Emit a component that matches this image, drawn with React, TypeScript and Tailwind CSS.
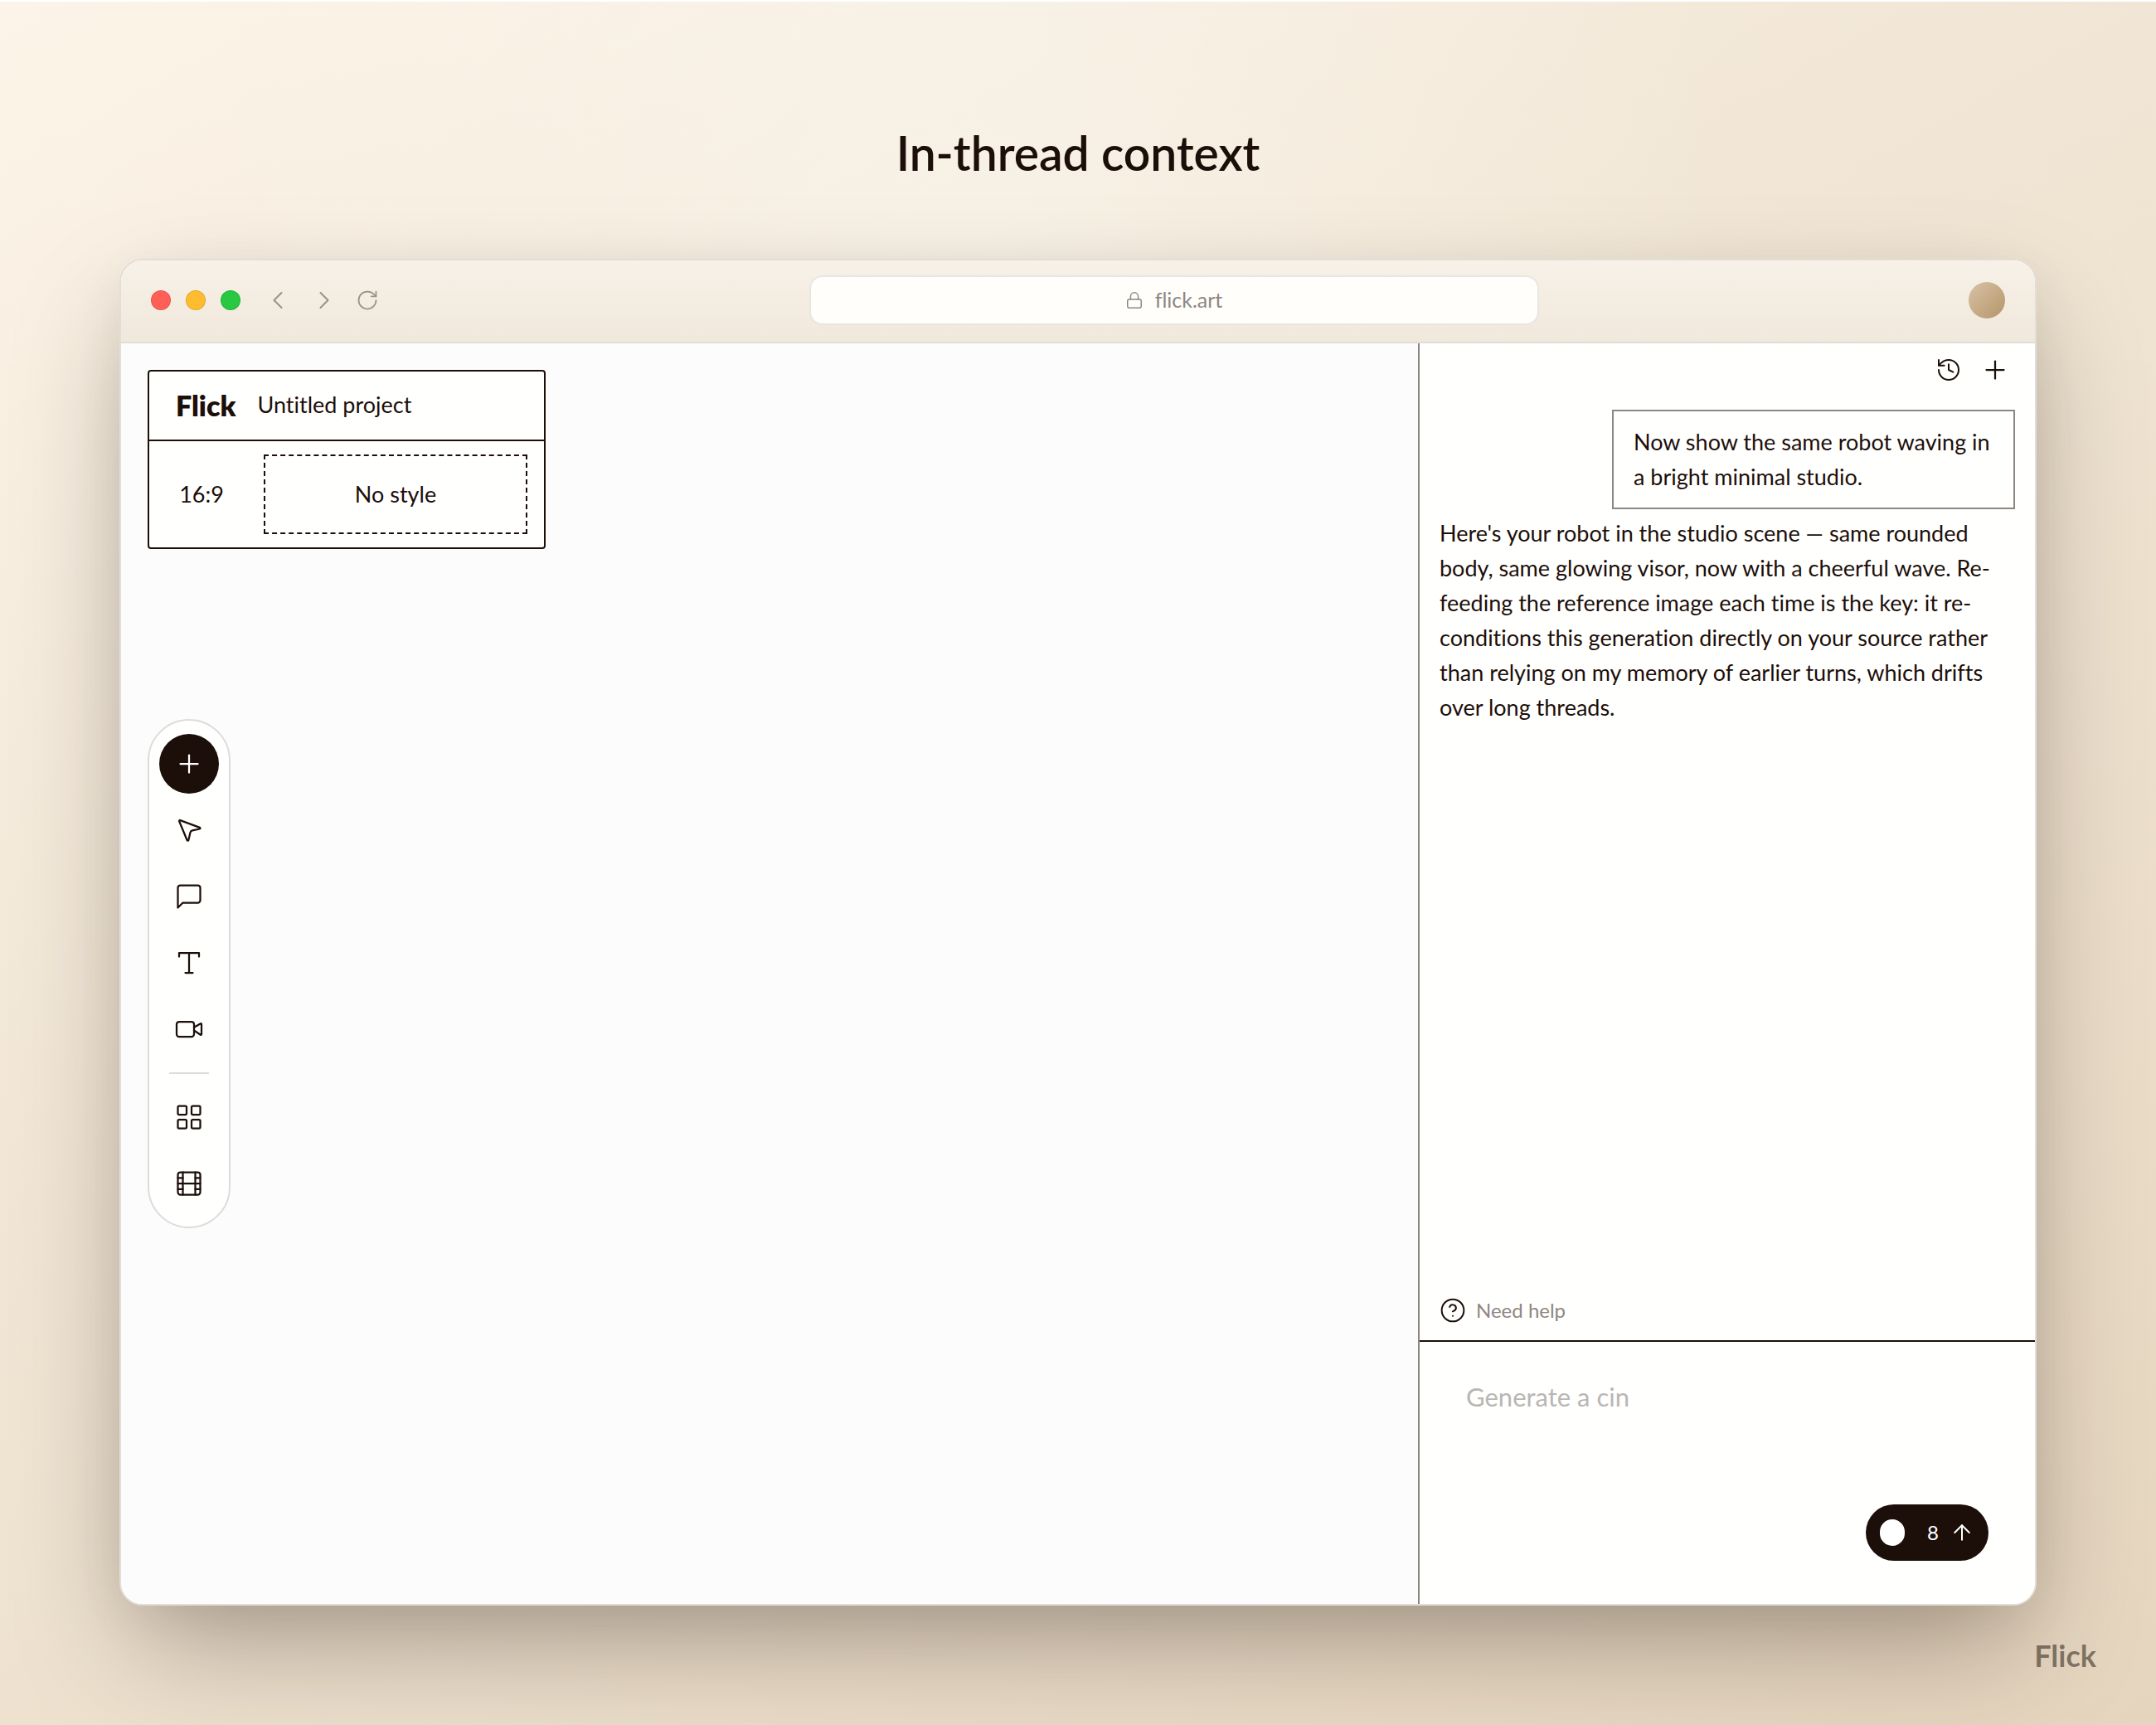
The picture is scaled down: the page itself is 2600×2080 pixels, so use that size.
import {
  ArrowUp,
  ChevronLeft,
  ChevronRight,
  CircleHelp,
  Film,
  History,
  LayoutGrid,
  Lock,
  Plus,
  RotateCw,
  Video,
} from "lucide-react";
import type { ReactNode } from "react";

const stroke = {
  fill: "none",
  stroke: "currentColor",
  strokeWidth: 1.5,
  strokeLinecap: "round" as const,
  strokeLinejoin: "round" as const,
};

function CursorIcon() {
  return (
    <svg width={36} height={36} viewBox="0 0 24 24" {...stroke}>
      <path d="M4.1 4.8a.6.6 0 0 1 .8-.75l15.7 5.9a.55.55 0 0 1-.05 1.05l-5.9 1.25a2.2 2.2 0 0 0-1.65 1.6l-1.45 6.2a.6.6 0 0 1-1.1.1z" />
    </svg>
  );
}

function CommentIcon() {
  return (
    <svg width={36} height={36} viewBox="0 0 24 24" {...stroke}>
      <path d="M21 15a2 2 0 0 1-2 2H7l-4 4V5a2 2 0 0 1 2-2h14a2 2 0 0 1 2 2z" />
    </svg>
  );
}

function TextIcon() {
  return (
    <svg width={36} height={36} viewBox="0 0 24 24" {...stroke}>
      <path d="M4 7V4h16v3M9 20h6M12 4v16" />
    </svg>
  );
}

function ToolButton({ label, primary, children }: { label: string; primary?: boolean; children: ReactNode }) {
  return (
    <button
      type="button"
      aria-label={label}
      className={
        primary
          ? "flex size-[72px] items-center justify-center rounded-full bg-[#1c0f0a] text-white"
          : "flex size-[72px] items-center justify-center rounded-full"
      }
    >
      {children}
    </button>
  );
}

function BrowserBar() {
  return (
    <header className="flex h-[100px] shrink-0 items-center border-b-2 border-[#e3dcd3] bg-linear-to-b from-[#f8f1e8] to-[#f0e8db] px-9 pb-0.5">
      <div className="flex gap-[18px]">
        <span className="size-6 rounded-full border border-black/10 bg-[#ff5f57]" />
        <span className="size-6 rounded-full border border-black/10 bg-[#febc2e]" />
        <span className="size-6 rounded-full border border-black/10 bg-[#28c840]" />
      </div>
      <nav className="ml-[27px] flex items-center gap-5 text-[#9a9189]">
        <button type="button" aria-label="Back">
          <ChevronLeft size={36} strokeWidth={1.4} />
        </button>
        <button type="button" aria-label="Forward">
          <ChevronRight size={36} strokeWidth={1.4} />
        </button>
        <button type="button" aria-label="Reload">
          <RotateCw size={28} strokeWidth={1.5} />
        </button>
      </nav>
      <div className="flex flex-1 justify-center">
        <div className="flex h-[60px] w-full max-w-[880px] items-center justify-center gap-[14px] rounded-2xl border-2 border-[#e9e6e1] bg-[#fffefa] text-[25px] text-[#8e8782]">
          <Lock size={22} strokeWidth={1.6} />
          <span>flick.art</span>
        </div>
      </div>
      <span className="size-11 rounded-full bg-linear-to-br from-[#d8c3a5] to-[#b5956a]" />
    </header>
  );
}

function ProjectCard() {
  return (
    <section className="w-[480px] rounded-[4px] border-2 border-[#1c0f0a] bg-[#fffffe] text-[27px]">
      <div className="flex h-[84px] items-center gap-[26px] border-b-2 border-[#1c0f0a] px-8 pb-0.5">
        <span className="text-[34px] font-extrabold">Flick</span>
        <span>Untitled project</span>
      </div>
      <div className="flex py-4 pr-5">
        <button type="button" className="mr-3 w-[126px]">
          16:9
        </button>
        <button type="button" className="h-24 flex-1 border-2 border-dashed border-[#1c0f0a]">
          No style
        </button>
      </div>
    </section>
  );
}

function Toolbar() {
  return (
    <div className="flex w-[100px] flex-col items-center gap-2 rounded-full border-2 border-[#dddcdb] bg-[#fffffe] py-4">
      <ToolButton label="Add" primary>
        <Plus size={36} strokeWidth={1.5} />
      </ToolButton>
      <ToolButton label="Select">
        <CursorIcon />
      </ToolButton>
      <ToolButton label="Comment">
        <CommentIcon />
      </ToolButton>
      <ToolButton label="Text">
        <TextIcon />
      </ToolButton>
      <ToolButton label="Video">
        <Video size={36} strokeWidth={1.5} />
      </ToolButton>
      <hr className="my-2 w-12 border-t-2 border-[#dddcdb]" />
      <ToolButton label="Layouts">
        <LayoutGrid size={36} strokeWidth={1.5} />
      </ToolButton>
      <ToolButton label="Scenes">
        <Film size={36} strokeWidth={1.5} />
      </ToolButton>
    </div>
  );
}

function ChatPanel() {
  return (
    <aside className="flex w-[744px] shrink-0 flex-col border-l-2 border-[#8d8784] bg-[#fffffe]">
      <div className="flex h-16 shrink-0 items-center justify-end gap-[22px] pr-[30px]">
        <button type="button" aria-label="History">
          <History size={32} strokeWidth={1.5} />
        </button>
        <button type="button" aria-label="New thread">
          <Plus size={36} strokeWidth={1.5} />
        </button>
      </div>
      <div className="flex flex-1 flex-col gap-2 px-6 pt-4 text-[27px] leading-[42px]">
        <p className="w-[486px] self-end border-2 border-[#8d8784] px-6 py-4">
          Now show the same robot waving in a bright minimal studio.
        </p>
        <p>
          Here's your robot in the studio scene — same rounded body, same glowing visor, now with a cheerful wave.
          Re-feeding the reference image each time is the key: it re-conditions this generation directly on your
          source rather than relying on my memory of earlier turns, which drifts over long threads.
        </p>
      </div>
      <button type="button" className="flex h-[72px] items-center gap-3 px-6 text-2xl text-[#8e8782]">
        <CircleHelp size={32} strokeWidth={1.5} className="text-[#1c0f0a]" />
        Need help
      </button>
      <form className="flex flex-col border-t-2 border-[#1c0f0a] px-14 pt-11 pb-[52px]">
        <textarea
          aria-label="Prompt"
          placeholder="Generate a cin"
          className="h-[152px] resize-none text-[31px] leading-[44px] outline-none placeholder:text-[#b9b6b4]"
        />
        <button
          type="button"
          aria-label="Send, 8 credits"
          className="flex h-[68px] w-[148px] items-center self-end rounded-full bg-[#1c0f0a] px-[17px] text-white"
        >
          <span className="h-8 w-[30px] rounded-full bg-white" />
          <span className="mr-[13px] ml-auto text-2xl">8</span>
          <ArrowUp size={30} strokeWidth={1.6} />
        </button>
      </form>
    </aside>
  );
}

export default function App() {
  return (
    <div className="flex min-h-screen flex-col border-t-2 border-white bg-[radial-gradient(ellipse_at_45%_12%,rgba(250,246,238,0.5),transparent_45%),linear-gradient(150deg,#fcf4e8_0%,#f1e6d5_42%,#e5d5be_100%)] font-['Lato',sans-serif] text-[#1c0f0a] [font-variant-ligatures:none]">
      <h1 className="pt-[148px] pb-[94px] text-center text-[57px] leading-[68px] font-semibold">In-thread context</h1>
      <main className="mx-36 flex flex-1 flex-col overflow-hidden rounded-[28px] border-2 border-[#e1ded8] bg-[#fffffe] shadow-[0_60px_140px_-20px_rgba(28,15,10,0.34),0_16px_60px_rgba(28,15,10,0.05)]">
        <BrowserBar />
        <div className="flex flex-1">
          <div className="relative flex-1 bg-[#fcfcfc] p-8">
            <ProjectCard />
            <div className="absolute inset-y-0 left-8 flex items-center">
              <Toolbar />
            </div>
          </div>
          <ChatPanel />
        </div>
      </main>
      <footer className="flex h-36 justify-end px-[72px] pt-10 text-4xl leading-10 font-bold text-[#1c0f0a]/50">
        Flick
      </footer>
    </div>
  );
}
